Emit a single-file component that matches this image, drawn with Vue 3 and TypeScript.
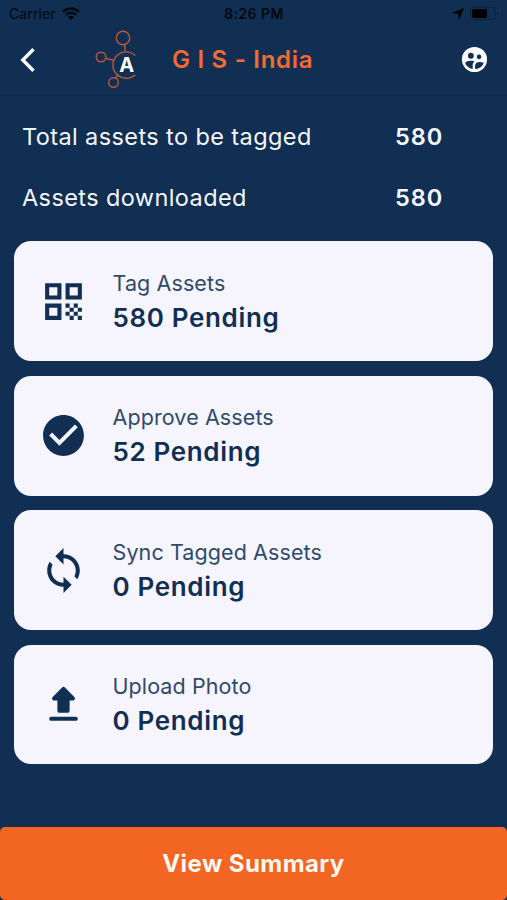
<script setup lang="ts">
type IconName = 'qr' | 'check' | 'sync' | 'upload'

interface Total {
  label: string
  value: number
}

interface Task {
  icon: IconName
  title: string
  pending: number
}

const totals: Total[] = [
  { label: 'Total assets to be tagged', value: 580 },
  { label: 'Assets downloaded', value: 580 },
]

const tasks: Task[] = [
  { icon: 'qr', title: 'Tag Assets', pending: 580 },
  { icon: 'check', title: 'Approve Assets', pending: 52 },
  { icon: 'sync', title: 'Sync Tagged Assets', pending: 0 },
  { icon: 'upload', title: 'Upload Photo', pending: 0 },
]

const iconPaths: Record<IconName, string> = {
  qr: 'M3 11h8V3H3v8zm2-6h4v4H5V5zM3 21h8v-8H3v8zm2-6h4v4H5v-4zM13 3v8h8V3h-8zm6 6h-4V5h4v4zM19 19h2v2h-2zM13 13h2v2h-2zM15 15h2v2h-2zM13 17h2v2h-2zM15 19h2v2h-2zM17 17h2v2h-2zM17 13h2v2h-2zM19 15h2v2h-2z',
  check: 'M12 2C6.48 2 2 6.48 2 12s4.48 10 10 10 10-4.48 10-10S17.52 2 12 2zm-2 15l-5-5 1.41-1.41L10 14.17l7.59-7.59L19 8l-9 9z',
  sync: 'M12 4V1L8 5l4 4V6c3.31 0 6 2.69 6 6 0 1.01-.25 1.97-.7 2.8l1.46 1.46C19.54 15.03 20 13.57 20 12c0-4.42-3.58-8-8-8zm0 14c-3.31 0-6-2.69-6-6 0-1.01.25-1.97.7-2.8L5.24 7.74C4.46 8.97 4 10.43 4 12c0 4.42 3.58 8 8 8v3l4-4-4-4v3z',
  upload: 'M10 16h4c.55 0 1-.45 1-1v-5h1.59c.89 0 1.34-1.08.71-1.71L12.71 3.7a.996.996 0 0 0-1.41 0L6.71 8.29c-.63.63-.19 1.71.7 1.71H9v5c0 .55.45 1 1 1zm-4 2h12c.55 0 1 .45 1 1s-.45 1-1 1H6c-.55 0-1-.45-1-1s.45-1 1-1z',
}
</script>

<template>
  <main class="screen">
    <div class="status">
      <div class="carrier">
        <span>Carrier</span>
        <svg class="wifi" viewBox="0 0 18 13">
          <path d="M9 13 L6.2 10.1 A4 4 0 0 1 11.8 10.1Z" />
          <path class="arc" d="M3.9 7.9 A7.2 7.2 0 0 1 14.1 7.9 M1 4.8 A11.3 11.3 0 0 1 17 4.8" />
        </svg>
      </div>
      <span class="time">8:26 PM</span>
      <div class="power">
        <svg class="location" viewBox="0 0 12 12"><path d="M12 0 L7 12 L6.2 5.8 L0 5Z" /></svg>
        <svg class="battery" viewBox="0 0 29 13">
          <rect class="shell" x=".5" y=".5" width="25" height="12" rx="3" />
          <rect x="2" y="2" width="15" height="9" rx="1.5" />
          <path class="tip" d="M27 4.5 A2.2 2.2 0 0 1 27 8.5Z" />
        </svg>
      </div>
    </div>

    <header class="bar">
      <svg class="back" viewBox="0 0 16 26"><path d="M13.5 2.2 L2.8 13 L13.5 23.8" /></svg>
      <svg class="logo" viewBox="0 0 44 60">
        <circle cx="28" cy="9" r="6.7" />
        <circle cx="6" cy="28" r="4.8" />
        <circle cx="18.5" cy="53.5" r="4.8" />
        <path d="M29.5 15.7 L30.3 22.5 M10.7 29.3 L18.5 31.4 M20.5 49 L23.5 45.5" />
        <path d="M40.2 26.5 A13.2 13.2 0 1 0 40.2 45.7" />
        <text x="31.7" y="42.7" text-anchor="middle">A</text>
      </svg>
      <h1>G I S - India</h1>
      <svg class="group" viewBox="0 0 24 24">
        <circle cx="12" cy="12" r="10.4" />
        <g class="cut">
          <circle cx="9" cy="8.9" r="2.4" />
          <circle cx="15.8" cy="9.8" r="1.9" />
          <path d="M4.3 14.6 C5.5 13.1 8 12.8 9.7 13 C10.7 13.1 11.5 13.4 12 13.7 C10.8 14.7 10.5 15.7 10.5 16.8 V19.8 C7.2 19.2 4.9 17.3 4.3 14.6Z" />
          <path d="M12.5 19.9 V16.8 C12.5 14.9 14.4 14 16.2 14 C17.5 14 18.7 14.3 19.6 14.9 C18.5 17.8 15.9 19.8 12.5 19.9Z" />
        </g>
      </svg>
    </header>

    <dl class="totals">
      <div v-for="total in totals" :key="total.label" class="total">
        <dt>{{ total.label }}</dt>
        <dd>{{ total.value }}</dd>
      </div>
    </dl>

    <section class="tasks">
      <article v-for="task in tasks" :key="task.title" class="task">
        <svg class="icon" viewBox="0 0 24 24"><path :d="iconPaths[task.icon]" /></svg>
        <div class="copy">
          <h2>{{ task.title }}</h2>
          <p>{{ task.pending }} Pending</p>
        </div>
      </article>
    </section>

    <button class="summary" type="button">View Summary</button>
  </main>
</template>

<style>
body {
  margin: 0;
  background: #112f52;
}
</style>

<style scoped>
.screen {
  display: flex;
  flex-direction: column;
  width: 507px;
  height: 900px;
  overflow: hidden;
  background: #112f52;
  font-family: Inter, 'Liberation Sans', sans-serif;
}

.status {
  display: grid;
  grid-template-columns: 1fr auto 1fr;
  align-items: center;
  height: 27px;
  padding: 0 8px 0 9px;
  box-sizing: border-box;
  color: #03080f;
  font-size: 14px;
}

.carrier,
.power {
  display: flex;
  align-items: center;
  gap: 6px;
}

.carrier {
  letter-spacing: 0.1px;
}

.power {
  justify-content: flex-end;
}

.time {
  font-weight: 600;
  letter-spacing: 0.5px;
}

.wifi {
  width: 18px;
  height: 13px;
}

.arc {
  fill: none;
  stroke: #03080f;
  stroke-width: 2.5;
}

.location {
  width: 12px;
  height: 12px;
}

.battery {
  width: 29px;
  height: 13px;
}

.shell {
  fill: none;
  stroke: #0b2340;
}

.tip {
  fill: #0b2340;
}

.bar {
  display: flex;
  align-items: center;
  height: 69px;
  padding: 0 18.5px 0 20px;
  box-sizing: border-box;
  border-bottom: 1px solid #0d2847;
}

.back {
  width: 16px;
  height: 26px;
  margin-top: -3px;
}

.back path {
  fill: none;
  stroke: #fff;
  stroke-width: 3.4;
}

.logo {
  width: 44px;
  height: 60px;
  margin: -4px 0 0 59px;
}

.logo circle,
.logo path {
  fill: none;
  stroke: #b55a3a;
  stroke-width: 1.4;
}

.logo text {
  fill: #fff;
  font-size: 20px;
  font-weight: 700;
}

h1 {
  flex: 1;
  margin: -3px 0 0 33px;
  color: #f26b31;
  font-size: 24px;
  font-weight: 600;
  line-height: 30px;
  letter-spacing: 0.72px;
  white-space: nowrap;
}

.group {
  width: 29px;
  height: 29px;
  margin-top: -3px;
}

.group > circle {
  fill: #fff;
}

.cut {
  fill: #112f52;
}

.totals {
  margin: 0;
  padding: 10px 0 0 22px;
}

.total {
  display: grid;
  grid-template-columns: 373px 1fr;
  align-items: center;
  height: 61px;
  color: #f5f7fb;
  font-size: 23.5px;
  line-height: 30px;
}

.total dt {
  letter-spacing: 0.4px;
}

.total dd {
  margin: 0;
  font-weight: 600;
  letter-spacing: 1px;
}

.tasks {
  display: flex;
  flex-direction: column;
  gap: 14.6px;
  padding: 13.4px 14px 0 14px;
}

.task {
  display: flex;
  align-items: center;
  height: 119.8px;
  padding-left: 24.5px;
  box-sizing: border-box;
  border-radius: 17px;
  background: #f6f5fd;
  color: #112f52;
}

.icon {
  flex: none;
  width: 49px;
  height: 49px;
  fill: currentColor;
}

.copy {
  margin: 1px 0 0 25px;
}

h2 {
  margin: 0;
  color: #304a69;
  font-size: 21.5px;
  font-weight: 400;
  line-height: 32px;
  letter-spacing: 0.1px;
}

p {
  margin: 0;
  font-size: 26px;
  font-weight: 600;
  line-height: 38px;
  letter-spacing: 0.65px;
}

.summary {
  height: 73px;
  margin-top: auto;
  padding: 0;
  border: 0;
  border-radius: 5px;
  background: #f36523;
  color: #fff8f0;
  font: 700 24px/30px Inter, 'Liberation Sans', sans-serif;
  letter-spacing: 0.42px;
}
</style>
